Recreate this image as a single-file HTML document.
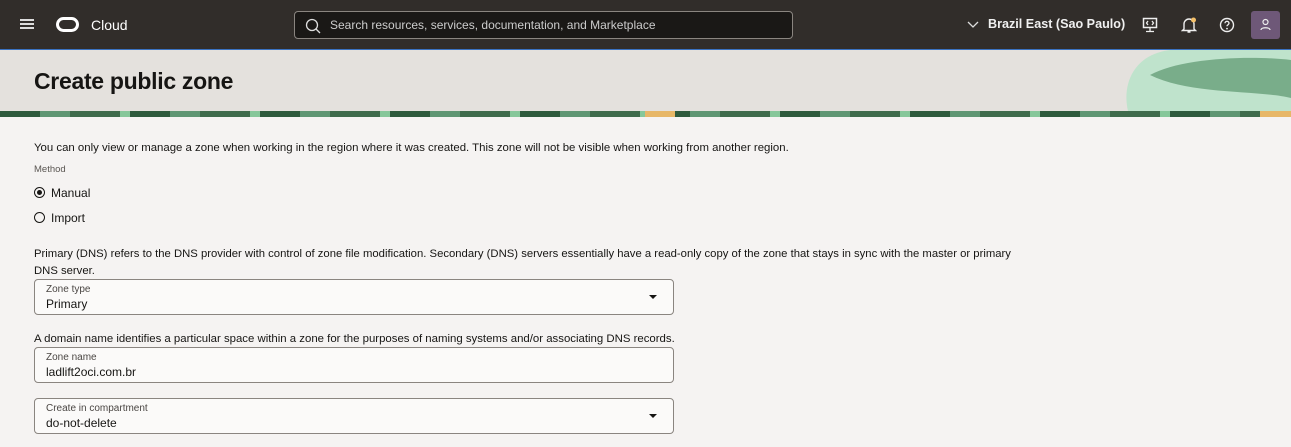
<!DOCTYPE html>
<html><head><meta charset="utf-8"><style>
*{box-sizing:border-box;margin:0;padding:0}
body{width:1291px;height:447px;overflow:hidden;background:#f5f3f2;font-family:"Liberation Sans",sans-serif;color:#161513;position:relative}
.hdr{position:absolute;left:0;top:0;width:1291px;height:49px;background:#312d2a;color:#fff}
.banner{position:absolute;left:0;top:49px;width:1291px;height:68px;background:#e4e1dd;border-top:1px solid #3a72c2;overflow:hidden}
.t{position:absolute;font-size:12px;white-space:nowrap}
.box{position:absolute;left:34px;width:640px;height:36px;border:1px solid #8a8580;border-radius:4px;background:#fbfaf9}
.box .l{position:absolute;left:11px;top:4px;font-size:10px;color:#4a4643}
.box .v{position:absolute;left:11px;top:17px;font-size:12px}
.box .a{position:absolute;right:16px;top:15px;width:0;height:0;border-left:4px solid transparent;border-right:4px solid transparent;border-top:4px solid #161513}
.radio{position:absolute;width:11px;height:11px;border:1px solid #161513;border-radius:50%}
</style></head><body>
<div class="hdr">
 <div style="position:absolute;left:20px;top:19px;width:14px;height:2px;background:#ddd;box-shadow:0 4px 0 #ddd,0 8px 0 #ddd"></div>
 <div style="position:absolute;left:56px;top:17px;width:23px;height:15px;border:3px solid #fff;border-radius:8px"></div>
 <div style="position:absolute;left:91px;top:17px;font-size:14px">Cloud</div>
 <div style="position:absolute;left:294px;top:11px;width:499px;height:28px;border:1px solid #8a8580;border-radius:4px;background:#1a1816">
  <svg style="position:absolute;left:10px;top:6px" width="16" height="16" viewBox="0 0 16 16"><circle cx="7" cy="7" r="5.5" fill="none" stroke="#ddd" stroke-width="1.3"/><path d="M11 11l4 4" stroke="#ddd" stroke-width="1.3"/></svg>
  <div style="position:absolute;left:35px;top:6px;font-size:12px;color:#ccc">Search resources, services, documentation, and Marketplace</div>
 </div>
 <svg style="position:absolute;left:967px;top:21px" width="12" height="8"><path d="M1 1l5 5 5-5" fill="none" stroke="#ddd" stroke-width="1.3"/></svg>
 <div style="position:absolute;left:988px;top:17px;font-size:12.6px;font-weight:bold;color:#f0f0f0">Brazil East (Sao Paulo)</div>
 <svg style="position:absolute;left:1142px;top:17px" width="16" height="16" viewBox="0 0 16 16"><rect x="1.5" y="1.5" width="13" height="9" fill="none" stroke="#eee" stroke-width="1.5"/><path d="M8 11v3M4 14.5h8M6 4L4.5 6 6 8M10 4l1.5 2L10 8" fill="none" stroke="#eee" stroke-width="1.3"/></svg>
 <svg style="position:absolute;left:1181px;top:16px" width="16" height="18" viewBox="0 0 16 18"><path d="M3 13V8a5 5 0 0110 0v5l1.5 1.5h-13z M6.5 16h3" fill="none" stroke="#eee" stroke-width="1.4"/><circle cx="12.5" cy="4" r="2.5" fill="#f4c06a"/></svg>
 <svg style="position:absolute;left:1219px;top:17px" width="16" height="16" viewBox="0 0 16 16"><circle cx="8" cy="8" r="6.5" fill="none" stroke="#eee" stroke-width="1.4"/><path d="M6 6.3a2 2 0 114 0c0 1.4-2 1.5-2 3" fill="none" stroke="#eee" stroke-width="1.3"/><circle cx="8" cy="11.6" r=".9" fill="#eee"/></svg>
 <div style="position:absolute;left:1251px;top:11px;width:29px;height:28px;background:#6e5878;border-radius:3px">
  <svg style="position:absolute;left:8px;top:7px" width="13" height="14" viewBox="0 0 13 14"><circle cx="6.5" cy="4" r="2.5" fill="none" stroke="#eee" stroke-width="1.2"/><path d="M2 12c0-3 9-3 9 0" fill="none" stroke="#eee" stroke-width="1.2"/></svg>
 </div>
</div>
<div class="banner">
 <svg style="position:absolute;left:1100px;top:0" width="191" height="68"><path d="M30 68C20 40 30 5 70 0L191 0V68z" fill="#bfe3cc"/><path d="M50 25C80 8 150 5 191 10V48C160 40 90 45 50 25z" fill="#79ad8a"/></svg>
 <div style="position:absolute;left:0;top:61px;width:1291px;height:7px;background:repeating-linear-gradient(90deg,#2e5a3d 0 40px,#5f9673 40px 70px,#3f6b4c 70px 120px,#86c79a 120px 130px)"></div>
 <div style="position:absolute;left:645px;top:61px;width:30px;height:7px;background:#e7b768"></div>
 <div style="position:absolute;left:1260px;top:61px;width:31px;height:7px;background:#e7b768"></div>
 <div style="position:absolute;left:34px;top:18px;font-size:23px;font-weight:bold;letter-spacing:-0.3px">Create public zone</div>
</div>
<div class="t" style="left:34px;top:142px;font-size:11.4px">You can only view or manage a zone when working in the region where it was created. This zone will not be visible when working from another region.</div>
<div class="t" style="left:34px;top:164px;font-size:9.5px;color:#5a5652">Method</div>
<div class="radio" style="left:34px;top:187px"><div style="position:absolute;left:2px;top:2px;width:5px;height:5px;border-radius:50%;background:#161513"></div></div>
<div class="t" style="left:51px;top:186px">Manual</div>
<div class="radio" style="left:34px;top:212px"></div>
<div class="t" style="left:51px;top:211px">Import</div>
<div class="t" style="left:34px;top:248px;font-size:11.3px">Primary (DNS) refers to the DNS provider with control of zone file modification. Secondary (DNS) servers essentially have a read-only copy of the zone that stays in sync with the master or primary</div>
<div class="t" style="left:34px;top:265px;font-size:11.3px">DNS server.</div>
<div class="box" style="top:279px"><div class="l">Zone type</div><div class="v">Primary</div><div class="a"></div></div>
<div class="t" style="left:34px;top:333px;font-size:11.4px">A domain name identifies a particular space within a zone for the purposes of naming systems and/or associating DNS records.</div>
<div class="box" style="top:347px"><div class="l">Zone name</div><div class="v">ladlift2oci.com.br</div></div>
<div class="box" style="top:398px"><div class="l">Create in compartment</div><div class="v">do-not-delete</div><div class="a"></div></div>
</body></html>
